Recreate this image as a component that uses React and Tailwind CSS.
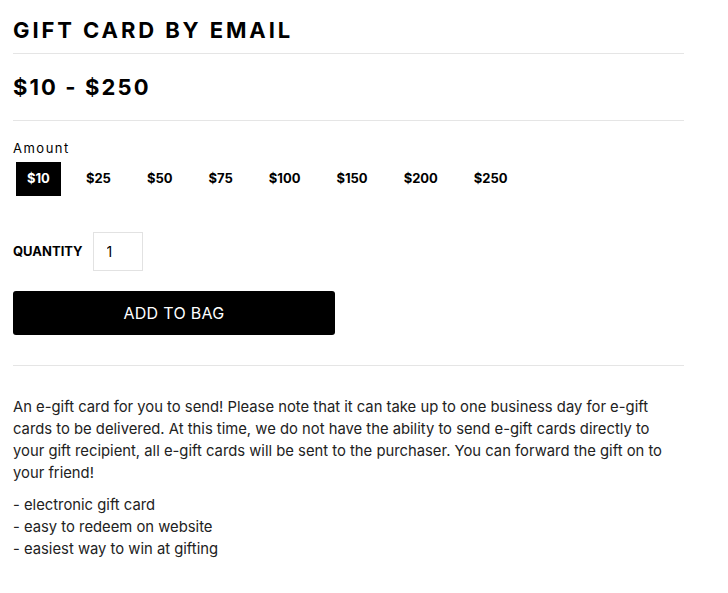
const amounts = ['$10', '$25', '$50', '$75', '$100', '$150', '$200', '$250'];

export default function App() {
  return (
    <div className="bg-white min-h-screen text-black" style={{ fontFamily: 'Inter, "Liberation Sans", sans-serif' }}>
      <div className="w-[671px] ml-[13px]">
        <h1 className="pt-[17px] pb-[9px] text-[22px] leading-[27px] font-bold tracking-[2.9px] border-b border-[#e5e5e5]">
          GIFT CARD BY EMAIL
        </h1>
        <div className="pt-[20px] pb-[20px] text-[22px] leading-[26px] font-bold tracking-[2.1px] border-b border-[#e5e5e5]">
          $10 - $250
        </div>

        <div className="pt-[19px] text-[13px] leading-[16px] tracking-[1.5px]">Amount</div>
        <div className="flex items-center mt-[6px] ml-[3px]">
          {amounts.map((a, i) => (
            <button
              key={a}
              className={
                'h-[34px] px-[11px] mr-[14px] text-[13px] font-bold ' +
                (i === 0 ? 'bg-black text-white' : 'text-black')
              }
            >
              {a}
            </button>
          ))}
        </div>

        <div className="flex items-center mt-[36px]">
          <span className="text-[13px] font-bold mr-[10px]">QUANTITY</span>
          <input
            defaultValue="1"
            className="w-[50px] h-[39px] border border-[#e2e2e2] pl-[13px] text-[14px] outline-none"
          />
        </div>

        <button className="mt-[20px] w-[322px] h-[44px] bg-black text-white rounded-[3px] text-[16px] tracking-[0.3px]">
          ADD TO BAG
        </button>

        <div className="mt-[30px] border-t border-[#e5e5e5]" />

        <div className="pt-[30px] text-[14.8px] leading-[22px] text-[#222]">
          <p>
            An e-gift card for you to send! Please note that it can take up to one business day for e-gift cards to be
            delivered. At this time, we do not have the ability to send e-gift cards directly to your gift recipient,
            all e-gift cards will be sent to the purchaser. You can forward the gift on to your friend!
          </p>
          <p className="mt-[10px]">
            - electronic gift card
            <br />- easy to redeem on website
            <br />- easiest way to win at gifting
          </p>
        </div>
      </div>
    </div>
  );
}
